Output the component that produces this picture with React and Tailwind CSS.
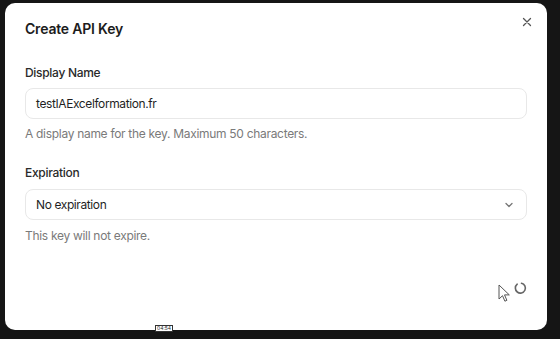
import React from "react";

export default function App() {
  return (
    <div
      className="relative w-[560px] h-[339px] bg-[#151515] overflow-hidden pl-[5px] pt-[3px]"
      style={{ fontFamily: "Inter, 'Noto Sans', sans-serif" }}
    >
      <div className="relative w-[542px] h-[327px] bg-white rounded-[10px] px-5 pt-4 flex flex-col">
        <div className="flex items-start justify-between">
          <h2 className="text-[14px] leading-5 font-semibold text-[#1c1c1c] tracking-[-0.2px]">
            Create API Key
          </h2>
          <button className="-mt-[5px] -mr-[8px] w-4 h-4 flex items-center justify-center text-[#555]">
            <svg width="10" height="10" viewBox="0 0 10 10" fill="none" stroke="currentColor" strokeWidth="1.3" strokeLinecap="round">
              <path d="M1.5 1.5l7 7M8.5 1.5l-7 7" />
            </svg>
          </button>
        </div>

        <div className="mt-6 text-[12px] leading-5 font-medium text-[#2a2a2a] tracking-[-0.3px]">Display Name</div>
        <div className="mt-[5px] h-[31px] border border-[#e8e8e8] rounded-lg flex items-center px-[10px] text-[12px] tracking-[-0.4px] text-[#1f1f1f]">
          testIAExcelformation.fr
        </div>
        <div className="mt-[5px] text-[12px] leading-5 text-[#7a7a7a] tracking-[-0.3px]">
          A display name for the key. Maximum 50 characters.
        </div>

        <div className="mt-[19px] text-[12px] leading-5 font-medium text-[#2a2a2a] tracking-[-0.3px]">Expiration</div>
        <div className="mt-[6px] h-[31px] border border-[#e8e8e8] rounded-lg flex items-center justify-between px-[10px] text-[12px] tracking-[-0.4px] text-[#1f1f1f]">
          <span>No expiration</span>
          <svg width="12" height="12" viewBox="0 0 12 12" fill="none" stroke="#777" strokeWidth="1.3" strokeLinecap="round" strokeLinejoin="round" className="mr-[1px]">
            <path d="M3 4.5l3 3 3-3" />
          </svg>
        </div>
        <div className="mt-[6px] text-[12px] leading-5 text-[#7a7a7a] tracking-[-0.3px]">This key will not expire.</div>

        <svg className="absolute left-[493px] top-[281px]" width="12" height="19" viewBox="0 0 12 19" fill="white" stroke="#555" strokeWidth="1">
          <path d="M1 1v14l3.5-3.3 2.4 5.5 2-0.9-2.4-5.4h4.8z" />
        </svg>
        <svg className="absolute left-[508px] top-[278px]" width="14" height="14" viewBox="0 0 14 14" fill="none" stroke="#666" strokeWidth="1.6" strokeLinecap="round">
          <path d="M4.2 3.2A5 5 0 1 0 8.5 2.2" />
        </svg>
      </div>

      <div className="absolute left-[155px] top-[325px] h-[7px] px-[1px] bg-white border border-[#333] text-[5px] leading-[5px] text-[#222] flex items-center">
        04:54
      </div>
    </div>
  );
}
